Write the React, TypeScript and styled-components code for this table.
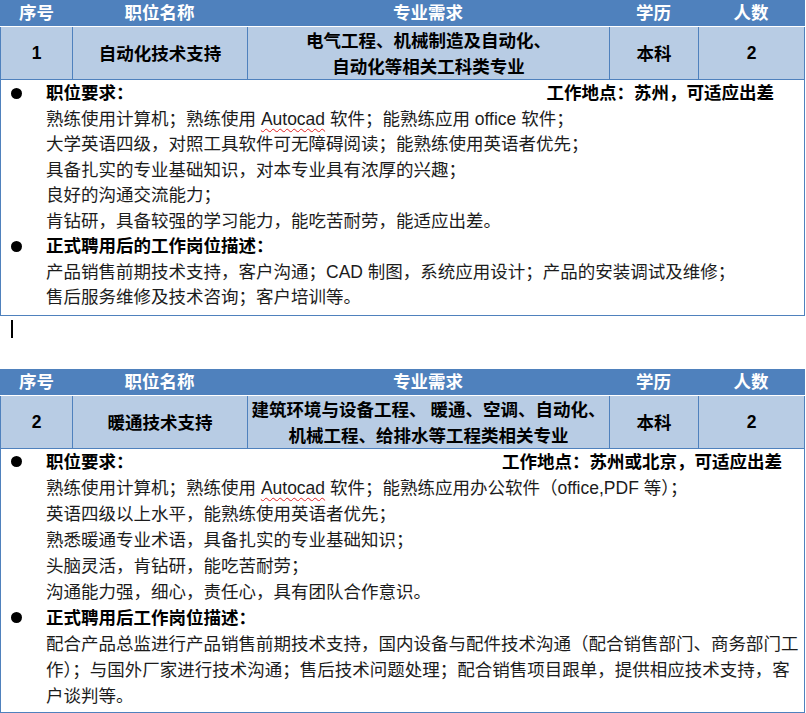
import React from "react";
import styled, { createGlobalStyle } from "styled-components";

const BLUE = "#4f81bd";
const LIGHT = "#b8cce4";

const GlobalStyle = createGlobalStyle`
  html, body {
    margin: 0;
    padding: 0;
    background: #ffffff;
  }
  body {
    font-family: "Liberation Sans", "Noto Sans CJK SC", sans-serif;
    color: #111;
  }
`;

const Page = styled.div`
  width: 806px;
  display: flex;
  flex-direction: column;
`;

const Table = styled.section`
  width: 805px;
  box-sizing: border-box;
  border-left: 1px solid ${BLUE};
  border-right: 1px solid ${BLUE};
  border-bottom: 1px solid ${BLUE};
  display: flex;
  flex-direction: column;
`;

const HeadRow = styled.div`
  display: grid;
  grid-template-columns: 71px 175px 362px 89px 1fr;
  height: 26px;
  background: ${BLUE};
  border-bottom: 1px solid #ffffff;
  margin-left: -1px;
  margin-right: -1px;
  padding-left: 1px;
  padding-right: 1px;
`;

const HeadCell = styled.div`
  display: flex;
  align-items: center;
  justify-content: center;
  color: #ffffff;
  font-size: 17.5px;
  font-weight: 700;
  line-height: 26px;
`;

const DataRow = styled.div`
  display: grid;
  grid-template-columns: 72px 175px 362px 89px 1fr;
  height: 53px;
  box-sizing: border-box;
  background: ${LIGHT};
  border-bottom: 1px solid ${BLUE};
`;

const DataCell = styled.div<{ $last?: boolean; $latin?: boolean }>`
  display: flex;
  flex-direction: column;
  align-items: center;
  justify-content: center;
  text-align: center;
  border-right: ${(p) => (p.$last ? "none" : `1px solid ${BLUE}`)};
  font-size: 17.5px;
  font-weight: 700;
  line-height: 26px;
  color: #000;
  white-space: nowrap;
  font-family: ${(p) =>
    p.$latin
      ? `"Liberation Sans", Arial, sans-serif`
      : `"Noto Sans CJK SC", sans-serif`};
`;

const Body = styled.div<{ $lh: number; $pt: number; $pb: number }>`
  display: flex;
  flex-direction: column;
  padding-top: ${(p) => p.$pt}px;
  padding-bottom: ${(p) => p.$pb}px;
  font-size: 17.5px;
  line-height: ${(p) => p.$lh}px;
`;

const BulletLine = styled.div<{ $locPad?: number }>`
  position: relative;
  display: flex;
  justify-content: space-between;
  padding-left: 45px;
  padding-right: ${(p) => p.$locPad ?? 0}px;
  font-weight: 700;
  color: #000;
  white-space: nowrap;
`;

const Dot = styled.span`
  position: absolute;
  left: 10px;
  top: 50%;
  width: 11px;
  height: 11px;
  margin-top: -6px;
  border-radius: 50%;
  background: #000;
`;

const TextLine = styled.div`
  padding-left: 45px;
  color: #1c1c1c;
  white-space: pre;
`;

const Squiggle = styled.span`
  text-decoration: underline wavy #e02020;
  text-decoration-thickness: 1px;
  text-underline-offset: 3px;
`;

const CaretGap = styled.div`
  height: 53px;
  padding-left: 11px;
  padding-top: 4px;
  box-sizing: border-box;
`;

const Caret = styled.div`
  width: 2px;
  height: 18px;
  background: #000;
`;

type Line = React.ReactNode;

type Job = {
  no: string;
  title: string;
  major: string[];
  degree: string;
  count: string;
  location: string;
  locPad: number;
  reqHead: string;
  reqs: Line[];
  descHead: string;
  descs: Line[];
  lh: number;
  pt: number;
  pb: number;
};

const jobs: Job[] = [
  {
    no: "1",
    title: "自动化技术支持",
    major: ["电气工程、机械制造及自动化、", "自动化等相关工科类专业"],
    degree: "本科",
    count: "2",
    location: "工作地点：苏州，可适应出差",
    locPad: 30,
    reqHead: "职位要求：",
    reqs: [
      <>
        熟练使用计算机；熟练使用 <Squiggle>Autocad</Squiggle> 软件；能熟练应用 office 软件；
      </>,
      "大学英语四级，对照工具软件可无障碍阅读；能熟练使用英语者优先；",
      "具备扎实的专业基础知识，对本专业具有浓厚的兴趣；",
      "良好的沟通交流能力；",
      "肯钻研，具备较强的学习能力，能吃苦耐劳，能适应出差。",
    ],
    descHead: "正式聘用后的工作岗位描述：",
    descs: [
      "产品销售前期技术支持，客户沟通；CAD 制图，系统应用设计；产品的安装调试及维修；",
      "售后服务维修及技术咨询；客户培训等。",
    ],
    lh: 25.5,
    pt: 1,
    pb: 4,
  },
  {
    no: "2",
    title: "暖通技术支持",
    major: ["建筑环境与设备工程、 暖通、空调、自动化、", "机械工程、给排水等工程类相关专业"],
    degree: "本科",
    count: "2",
    location: "工作地点：苏州或北京，可适应出差",
    locPad: 22,
    reqHead: "职位要求：",
    reqs: [
      <>
        熟练使用计算机；熟练使用 <Squiggle>Autocad</Squiggle> 软件；能熟练应用办公软件（office,PDF 等）；
      </>,
      "英语四级以上水平，能熟练使用英语者优先；",
      "熟悉暖通专业术语，具备扎实的专业基础知识；",
      "头脑灵活，肯钻研，能吃苦耐劳；",
      "沟通能力强，细心，责任心，具有团队合作意识。",
    ],
    descHead: "正式聘用后工作岗位描述：",
    descs: [
      "配合产品总监进行产品销售前期技术支持，国内设备与配件技术沟通（配合销售部门、商务部门工",
      "作）；与国外厂家进行技术沟通；售后技术问题处理；配合销售项目跟单，提供相应技术支持，客",
      "户谈判等。",
    ],
    lh: 26,
    pt: 0,
    pb: 3,
  },
];

const headers = ["序号", "职位名称", "专业需求", "学历", "人数"];

function JobTable({ job }: { job: Job }) {
  return (
    <Table>
      <HeadRow>
        {headers.map((h) => (
          <HeadCell key={h}>{h}</HeadCell>
        ))}
      </HeadRow>
      <DataRow>
        <DataCell $latin>{job.no}</DataCell>
        <DataCell>{job.title}</DataCell>
        <DataCell>
          {job.major.map((m, i) => (
            <div key={i}>{m}</div>
          ))}
        </DataCell>
        <DataCell>{job.degree}</DataCell>
        <DataCell $last $latin>
          {job.count}
        </DataCell>
      </DataRow>
      <Body $lh={job.lh} $pt={job.pt} $pb={job.pb}>
        <BulletLine $locPad={job.locPad}>
          <Dot />
          <span>{job.reqHead}</span>
          <span>{job.location}</span>
        </BulletLine>
        {job.reqs.map((r, i) => (
          <TextLine key={i}>{r}</TextLine>
        ))}
        <BulletLine>
          <Dot />
          <span>{job.descHead}</span>
        </BulletLine>
        {job.descs.map((d, i) => (
          <TextLine key={i}>{d}</TextLine>
        ))}
      </Body>
    </Table>
  );
}

export default function App() {
  return (
    <Page>
      <GlobalStyle />
      <JobTable job={jobs[0]} />
      <CaretGap>
        <Caret />
      </CaretGap>
      <JobTable job={jobs[1]} />
    </Page>
  );
}
